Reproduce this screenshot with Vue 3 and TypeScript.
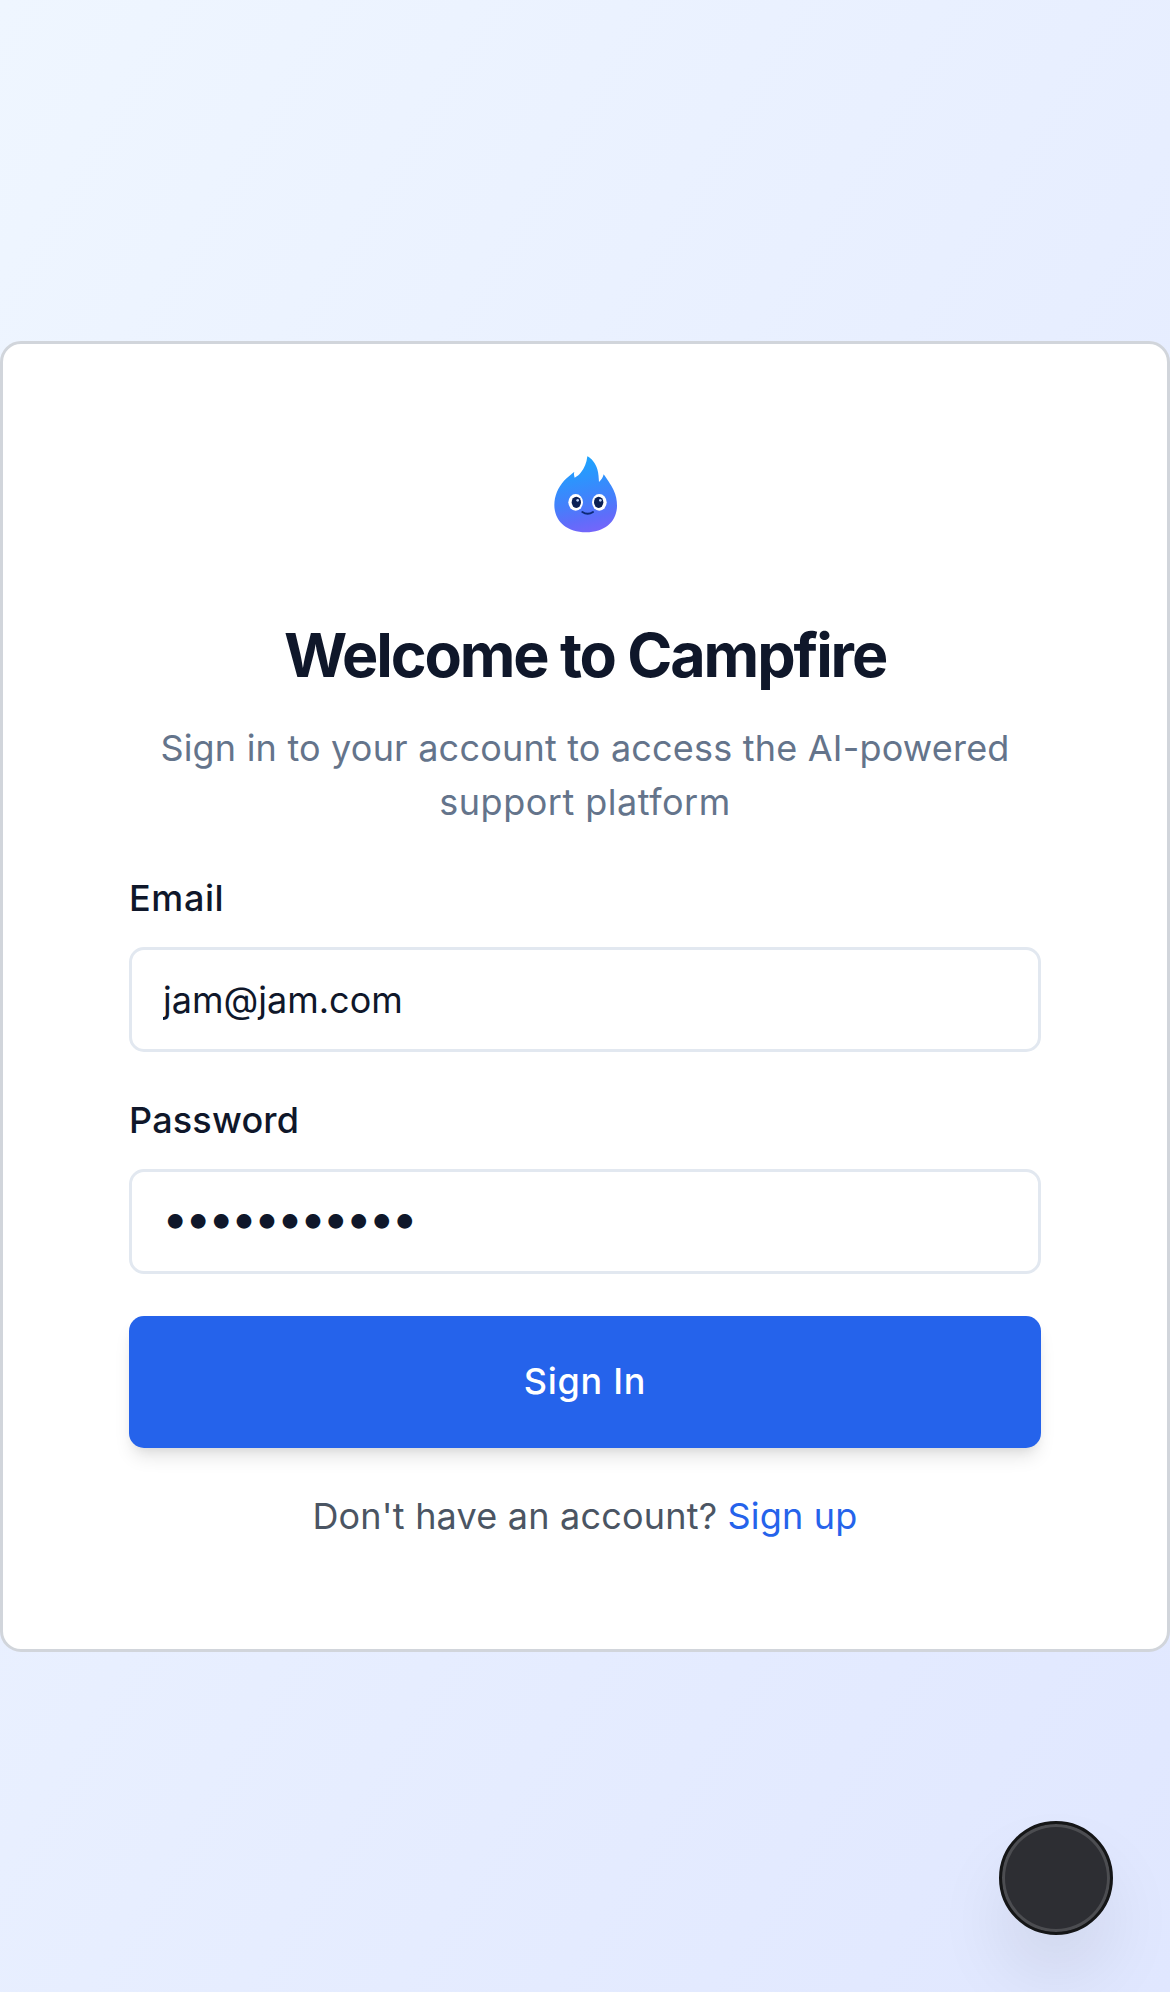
<script setup lang="ts">
import { ref } from 'vue'

const email = ref<string>('jam@jam.com')
const password = ref<string>('campfire123')
</script>

<template>
  <main class="page">
    <section class="card">
      <svg class="logo" viewBox="0 0 300 330" aria-hidden="true">
        <defs>
          <linearGradient id="flame" x1="0.42" y1="0" x2="0.6" y2="1">
            <stop offset="0" stop-color="#1ca5fd" />
            <stop offset="0.3" stop-color="#2e93fd" />
            <stop offset="0.6" stop-color="#457ffb" />
            <stop offset="0.82" stop-color="#5f6dfa" />
            <stop offset="1" stop-color="#7565fa" />
          </linearGradient>
        </defs>
        <path
          fill="url(#flame)"
          d="M157 49C169 54 182 70 187 88C191 101 191 114 192 126C199 120 204 112 206 103C214 114 228 134 236 151C243 166 246 181 246 197C246 243 211 277 153 277C94 277 58 242 58 195C58 167 69 143 87 122C97 111 109 103 118 95C116 102 117 106 119 113C127 108 132 104 137 98C148 86 155 68 157 49Z"
        />
        <ellipse cx="122" cy="187" rx="22" ry="25" fill="#fff" />
        <ellipse cx="193" cy="187" rx="22" ry="25" fill="#fff" />
        <ellipse cx="124" cy="187" rx="14" ry="17" fill="#0b2055" />
        <ellipse cx="191" cy="187" rx="14" ry="17" fill="#0b2055" />
        <circle cx="128" cy="181" r="4" fill="#b9cdf5" />
        <circle cx="196" cy="181" r="4" fill="#b9cdf5" />
        <path d="M142 216Q158 227 174 216" fill="none" stroke="#0d2a78" stroke-width="6" stroke-linecap="round" />
      </svg>
      <h1 class="title">Welcome to Campfire</h1>
      <p class="subtitle">
        Sign in to your account to access the AI-powered <span class="tail">support platform</span>
      </p>
      <form class="form" @submit.prevent>
        <label class="label" for="email">Email</label>
        <input id="email" v-model="email" class="input" type="email" />
        <label class="label second" for="password">Password</label>
        <input id="password" v-model="password" class="input secret" type="password" />
        <button class="submit" type="submit">Sign In</button>
      </form>
      <p class="footer">Don't have an account? <a class="link">Sign up</a></p>
    </section>
    <button class="bubble" type="button" aria-label="Open menu"></button>
  </main>
</template>

<style>
body {
  margin: 0;
}
</style>

<style scoped>
.page {
  box-sizing: border-box;
  position: relative;
  height: 1992px;
  padding-top: 341px;
  overflow: hidden;
  background: linear-gradient(to bottom right, #eff6ff, #e0e7ff);
  font-family: Inter, 'Liberation Sans', sans-serif;
  font-size: 36px;
  letter-spacing: 0.2px;
  color: #0f172a;
}
.card {
  box-sizing: border-box;
  height: 1311px;
  padding: 96px 126px 0;
  border: 3px solid #d1d5db;
  border-radius: 21px;
  background: #fff;
}
.logo {
  display: block;
  width: 100px;
  height: 110px;
  margin: 0 auto;
}
.title {
  margin: 68px 0 0;
  font-size: 61px;
  line-height: 75px;
  font-weight: 700;
  letter-spacing: -2.1px;
  text-align: center;
  white-space: nowrap;
}
.subtitle {
  margin: 28px 0 0;
  line-height: 54px;
  text-align: center;
  color: #64748b;
}
.tail {
  letter-spacing: 0.5px;
}
.form {
  display: flex;
  flex-direction: column;
  margin-top: 51px;
}
.label {
  line-height: 36px;
  font-weight: 450;
  letter-spacing: 0.6px;
}
.second {
  margin-top: 50px;
  letter-spacing: 0.2px;
}
.input {
  box-sizing: border-box;
  width: 100%;
  height: 105px;
  margin: 31px 0 0;
  padding: 0 31px;
  border: 3px solid #e2e8f0;
  border-radius: 15px;
  outline: none;
  background: #fff;
  font: inherit;
  letter-spacing: 0;
  color: inherit;
}
.secret {
  padding: 0 30px 8px;
  font-size: 47px;
  letter-spacing: -3.5px;
}
.submit {
  height: 132px;
  margin-top: 42px;
  padding: 0 0 2px;
  border: 0;
  border-radius: 15px;
  background: #2563eb;
  box-shadow: 0 12px 18px -3px rgba(0, 0, 0, 0.1), 0 6px 12px -6px rgba(0, 0, 0, 0.1);
  font: inherit;
  font-weight: 450;
  letter-spacing: 0.7px;
  color: #fff;
}
.footer {
  margin: 41px 0 0;
  line-height: 54px;
  text-align: center;
  color: #4b5563;
}
.link {
  color: #2563eb;
}
.bubble {
  box-sizing: border-box;
  position: absolute;
  left: 999px;
  top: 1821px;
  width: 114px;
  height: 114px;
  padding: 0;
  border: 3px solid #151617;
  border-radius: 50%;
  background: #2d2e33;
  box-shadow: inset 0 0 0 3px #4c4d51, 0 42px 76px -4px rgba(0, 0, 0, 0.09);
}
</style>
